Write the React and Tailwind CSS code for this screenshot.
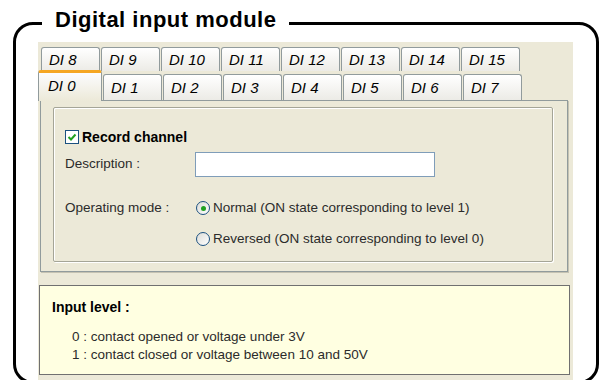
import React from 'react';

// Digital input module settings panel (XP style dialog inside a rounded frame)

const backTabs = [8, 9, 10, 11, 12, 13, 14, 15];
const frontTabs = [1, 2, 3, 4, 5, 6, 7];

function Tab({ label, tall }) {
  return (
    <div
      className={
        'flex w-[59px] items-center rounded-t-[3px] border border-b-0 border-[#919B9C] bg-linear-to-b from-white to-[#ECEBE6] pl-[7px] text-[15px] italic leading-[18px] text-black ' +
        (tall ? 'h-[24px]' : 'h-[26px]')
      }
    >
      DI {label}
    </div>
  );
}

function Radio({ checked }) {
  return (
    <div className="flex h-[14px] w-[14px] shrink-0 items-center justify-center rounded-full border border-[#1C5180] bg-linear-to-br from-[#DCDCD7] to-white">
      {checked && <div className="h-[5px] w-[5px] rounded-full bg-[#21A121]" />}
    </div>
  );
}

export default function App() {
  return (
    <div className="h-[380px] w-[601px] overflow-hidden bg-white font-['Liberation_Sans',Arial,sans-serif] text-[#2b2b2b]">
      {/* rounded frame */}
      <div className="relative ml-[13px] mt-[22px] h-[362px] w-[586px] rounded-[20px] border-[3px] border-black">
        <div className="absolute left-[26px] top-[-16px] bg-white px-[13px] text-[22px] font-bold leading-[22px] tracking-[0.5px] text-black">
          Digital input module
        </div>

        {/* dialog area */}
        <div className="ml-[22px] mt-[17px] h-[339px] w-[535px] bg-[#ECE9D8] pl-[2px] pt-[5px]">
          {/* back tab row */}
          <div className="ml-px flex h-[24px] gap-px">
            {backTabs.map((n) => (
              <Tab key={n} label={n} tall />
            ))}
          </div>

          {/* front tab row */}
          <div className="flex h-[29px] items-end gap-px">
            <div className="relative z-10 -mb-px -ml-[2px] h-[31px] w-[64px] rounded-t-[3px] border-x border-t-[3px] border-x-[#919B9C] border-t-[#F5A623] bg-linear-to-b from-[#FCFCFE] to-[#ECE9D8] pl-[9px] pt-[3px] text-[15px] italic leading-[20px] text-black">
              DI 0
            </div>
            {frontTabs.map((n) => (
              <Tab key={n} label={n} />
            ))}
          </div>

          {/* tab page */}
          <div className="h-[172px] w-[528px] border border-[#919B9C] bg-[#ECE9D8] pl-[12px] pt-[6px] shadow-[1px_1px_0_#C5C2B2]">
            <div className="h-[155px] w-[500px] rounded-[2px] border border-[#A5A597] pl-[11px] pt-[20px] shadow-[inset_1px_1px_0_#ffffff,1px_1px_0_#ffffff]">
              <div className="flex h-[18px] items-center gap-[3px]">
                <div className="flex h-[14px] w-[14px] items-center justify-center border border-[#1C5180] bg-white">
                  <svg width="10" height="10" viewBox="0 0 10 10">
                    <path d="M1.5 5 L4 7.5 L8.5 2.5" fill="none" stroke="#21A121" strokeWidth="2" />
                  </svg>
                </div>
                <span className="text-[14px] font-bold text-black">Record channel</span>
              </div>

              <div className="mt-[6px] flex h-[25px] items-center">
                <span className="w-[130px] text-[13.5px]">Description :</span>
                <div className="h-[25px] w-[240px] border border-[#7F9DB9] bg-white" />
              </div>

              <div className="mt-[23px] flex h-[16px] items-center">
                <span className="w-[131px] text-[13.5px]">Operating mode :</span>
                <Radio checked />
                <span className="ml-[3px] text-[13.5px]">Normal (ON state corresponding to level 1)</span>
              </div>

              <div className="mt-[15px] flex h-[16px] items-center pl-[131px]">
                <Radio />
                <span className="ml-[3px] text-[13.5px]">Reversed (ON state corresponding to level 0)</span>
              </div>
            </div>
          </div>

          {/* help box */}
          <div className="-ml-px mt-[13px] h-[90px] w-[531px] border border-[#707070] bg-[#FFFFE1] pl-[12px] pt-[12px]">
            <div className="text-[14px] font-bold leading-[18px] text-black">Input level :</div>
            <div className="mt-[12px] pl-[20px] text-[13.5px] leading-[18px]">
              <div>0 : contact opened or voltage under 3V</div>
              <div>1 : contact closed or voltage between 10 and 50V</div>
            </div>
          </div>
        </div>
      </div>
    </div>
  );
}
